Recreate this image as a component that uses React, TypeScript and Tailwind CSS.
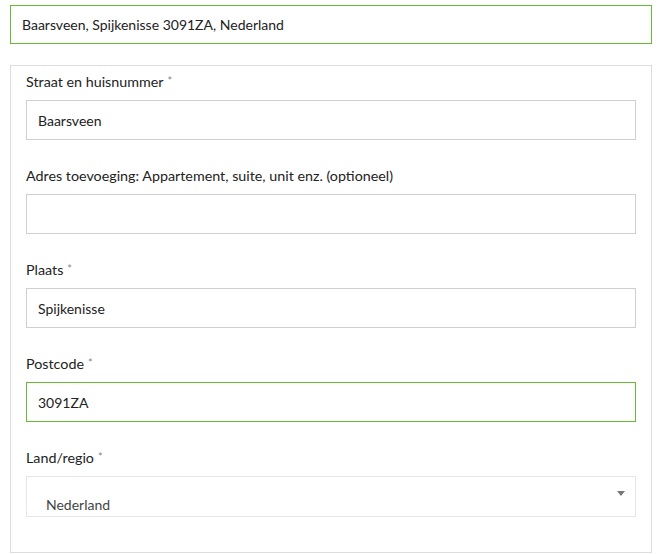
import React from "react";

const font = { fontFamily: "Lato, 'Noto Sans', sans-serif" };

function Label({ text, required }: { text: string; required?: boolean }) {
  return (
    <div className="h-[24px] mb-[6px] pb-[1px] flex items-center text-[14.3px] text-[#222]">
      <span>{text}</span>
      {required && <span className="ml-[4px] text-[11px] text-[#888] self-start mt-[3px]">*</span>}
    </div>
  );
}

function Field({ label, value, required, active }: { label: string; value: string; required?: boolean; active?: boolean }) {
  return (
    <div className="mb-[24px]">
      <Label text={label} required={required} />
      <div
        className={
          "h-[40px] flex items-center pl-[11px] text-[14px] text-[#222] border " +
          (active ? "border-[#66bb33]" : "border-[#cfcfcf]")
        }
      >
        {value}
      </div>
    </div>
  );
}

export default function App() {
  return (
    <div className="w-[662px] h-[554px] bg-white px-[10px] pt-[5px]" style={font}>
      <div className="h-[39px] border border-[#66bb33] flex items-center pl-[11px] text-[14px] text-[#222]">
        Baarsveen, Spijkenisse 3091ZA, Nederland
      </div>
      <div className="mt-[21px] border border-[#dddddd] px-[15px] pt-[4px] pb-[35px]">
        <Field label="Straat en huisnummer" value="Baarsveen" required />
        <Field label="Adres toevoeging: Appartement, suite, unit enz. (optioneel)" value="" />
        <Field label="Plaats" value="Spijkenisse" required />
        <Field label="Postcode" value="3091ZA" required active />
        <div>
          <Label text="Land/regio" required />
          <div className="h-[41px] border border-[#e6e6e6] flex justify-between pl-[19px] pr-[10px] text-[14px] text-[#444]">
            <span className="pt-[18px] leading-[20px]">Nederland</span>
            <svg width="8" height="5" viewBox="0 0 8 5" className="mt-[14px]">
              <polygon points="0,0 8,0 4,5" fill="#777" />
            </svg>
          </div>
        </div>
      </div>
    </div>
  );
}
